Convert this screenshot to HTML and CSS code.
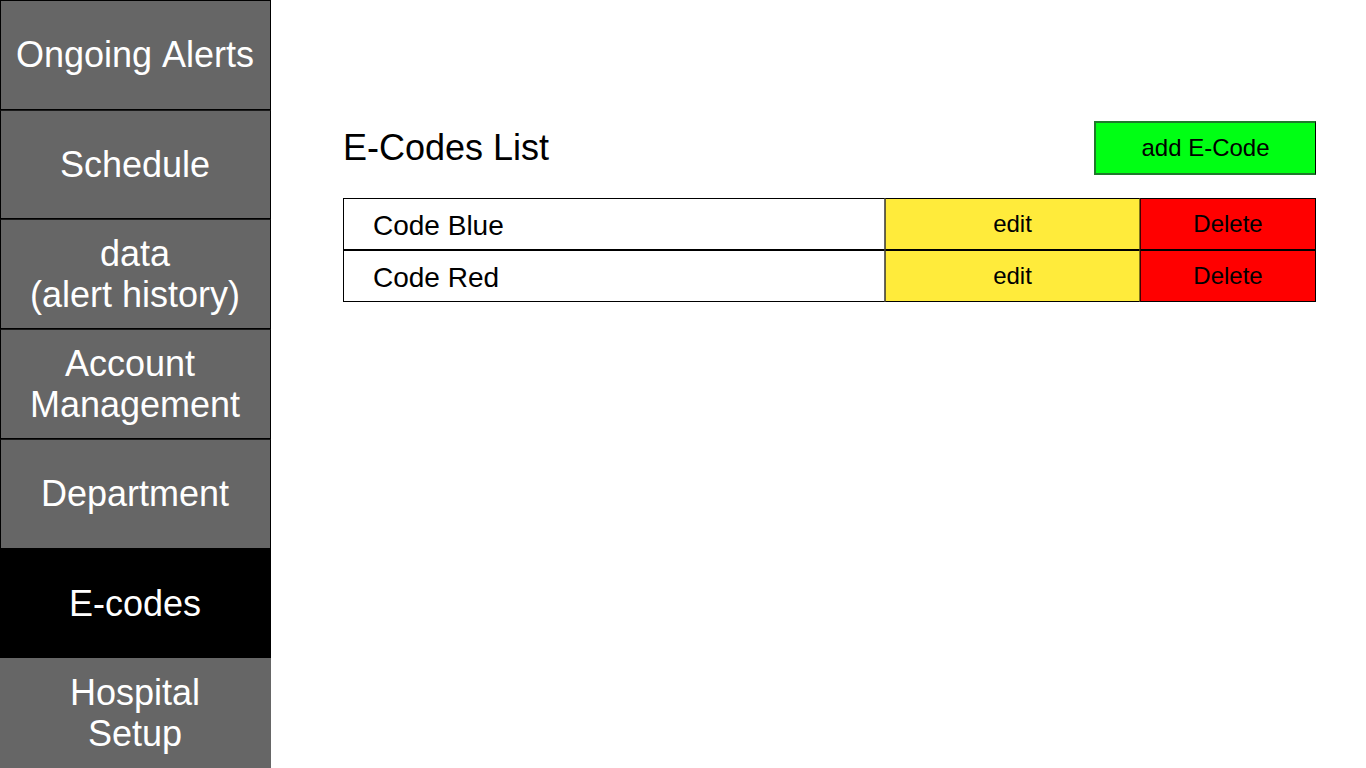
FILE: index.html
```html
<!DOCTYPE html>
<html lang="en">
<head>
<meta charset="utf-8">
<title>E-Codes List</title>
<link rel="stylesheet" href="styles.css">
</head>
<body>
<div class="app">
  <nav class="sidebar">
    <a class="nav-item" href="#alerts">Ongoing Alerts</a>
    <a class="nav-item" href="#schedule">Schedule</a>
    <a class="nav-item" href="#data">data<br>(alert history)</a>
    <a class="nav-item" href="#accounts">Account&nbsp;<br>Management</a>
    <a class="nav-item" href="#department">Department</a>
    <a class="nav-item active" href="#ecodes" aria-current="page">E-codes</a>
    <a class="nav-item plain" href="#setup">Hospital<br>Setup</a>
  </nav>
  <main class="content">
    <header class="content-header">
      <h1 class="title">E-Codes List</h1>
      <button class="btn add" type="button">add E-Code</button>
    </header>
    <table class="codes">
      <colgroup><col><col class="col-edit"><col class="col-delete"></colgroup>
      <tbody>
        <tr>
          <td class="name">Code Blue</td>
          <td class="action"><button class="btn edit" type="button">edit</button></td>
          <td class="action"><button class="btn delete" type="button">Delete</button></td>
        </tr>
        <tr>
          <td class="name">Code Red</td>
          <td class="action"><button class="btn edit" type="button">edit</button></td>
          <td class="action"><button class="btn delete" type="button">Delete</button></td>
        </tr>
      </tbody>
    </table>
  </main>
</div>
</body>
</html>
```
FILE: styles.css
```css
* {
  box-sizing: border-box;
}

body {
  margin: 0;
  background: #fff;
  color: #000;
  font-family: "Liberation Sans", Arial, sans-serif;
  font-kerning: none;
}

.app {
  display: flex;
  min-height: 100vh;
}

.sidebar {
  display: flex;
  flex-direction: column;
  flex: 0 0 271px;
}

.nav-item {
  display: flex;
  flex: 1 1 0;
  align-items: center;
  justify-content: center;
  padding-right: 1px;
  border: 1px solid #000;
  background: #666;
  color: #fff;
  font-size: 36px;
  line-height: 41px;
  text-align: center;
  text-decoration: none;
}

.nav-item + .nav-item {
  border-top-color: #1a1a1a;
}

.nav-item.active {
  border-top-color: #000;
  background: #000;
}

.nav-item.plain {
  border-color: #666;
}

.content {
  flex: 1;
  padding: 121px 50px 0 72px;
}

.content-header {
  display: flex;
  align-items: center;
  justify-content: space-between;
  margin-bottom: 23px;
}

.title {
  margin: 0;
  padding-bottom: 2px;
  font-size: 36px;
  font-weight: 400;
  line-height: 41px;
}

.btn {
  padding: 0;
  border: 1px solid #000;
  border-radius: 0;
  color: #000;
  font-family: inherit;
  font-size: 24px;
}

.add {
  width: 222px;
  height: 54px;
  border: 2px solid #1f7a2b;
  border-right: 1px solid #000;
  background: #00ff14;
}

.codes {
  width: 100%;
  table-layout: fixed;
  border-collapse: separate;
  border-spacing: 0;
}

.col-edit {
  width: 255px;
}

.col-delete {
  width: 176px;
}

.name {
  height: 52px;
  padding: 4px 0 0 29px;
  border: 1px solid #000;
  border-right-color: #666;
  font-size: 28px;
}

.action {
  padding: 0;
}

.edit,
.delete {
  display: block;
  width: 100%;
  height: 52px;
}

.edit {
  border-right-color: #7f751d;
  border-left-color: #666033;
  background: #ffeb3b;
}

.delete {
  border-left-color: #400;
  background: #f00;
}
```
